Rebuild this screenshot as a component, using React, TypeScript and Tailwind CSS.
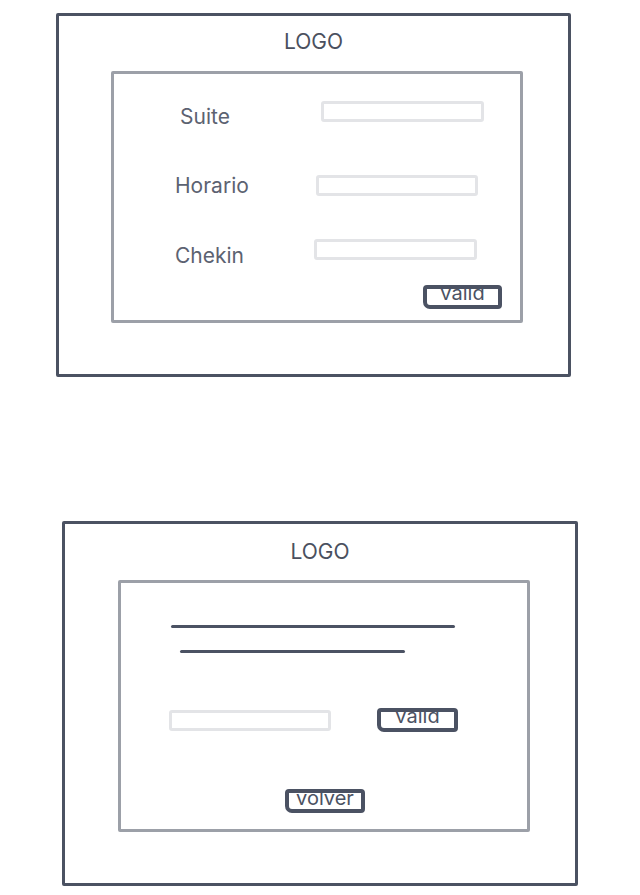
import React from 'react'

// ── Sketch pieces ──────────────────────────────────────────────────────────

function SketchInput({ className = '' }: { className?: string }) {
  return <div className={`h-[21px] border-[3px] border-[#e3e4e7] rounded-[3px] bg-white ${className}`} />
}

// the border is drawn over the label, so the tops of the letters get hidden like in the sketch
function SketchButton({ label, className = '', textTop = '-mt-[2px]' }: { label: string; className?: string; textTop?: string }) {
  return (
    <div className={`relative h-[24px] flex justify-center items-start ${className}`}>
      <span className={`${textTop} text-[20px] leading-[20px] text-[#4b5263] whitespace-nowrap`}>{label}</span>
      <div className="absolute inset-0 border-[4px] border-[#4b5263] rounded-[4px] rounded-bl-[7px]" />
    </div>
  )
}

function Logo() {
  return <div className="text-center text-[21px] leading-[24px] text-[#4a505e]">LOGO</div>
}

// ── Main ───────────────────────────────────────────────────────────────────

export default function App() {
  return (
    <div
      className="w-[640px] h-[895px] bg-white overflow-hidden"
      style={{ fontFamily: 'Inter, "Noto Sans", sans-serif' }}
    >
      {/* Screen 1: form */}
      <div className="ml-[56px] mt-[13px] w-[515px] h-[364px] border-[3px] border-[#4b5262] rounded-[2px] pt-[14px]">
        <Logo />
        <div className="ml-[52px] mt-[17px] w-[412px] h-[252px] border-[3px] border-[#9ca0a8] rounded-[2px] pt-[27px]">
          <div className="flex items-start h-[28px]">
            <span className="ml-[66px] w-[141px] mt-[4px] text-[21px] leading-[24px] text-[#5c6271]">Suite</span>
            <SketchInput className="w-[163px]" />
          </div>
          <div className="flex items-start h-[24px] mt-[45px]">
            <span className="ml-[61px] w-[141px] text-[21px] leading-[24px] text-[#5c6271]">Horario</span>
            <SketchInput className="w-[162px] mt-[1px]" />
          </div>
          <div className="flex items-start h-[29px] mt-[41px]">
            <span className="ml-[61px] w-[139px] mt-[5px] text-[21px] leading-[24px] text-[#5c6271]">Chekin</span>
            <SketchInput className="w-[163px]" />
          </div>
          <div className="flex justify-end mt-[17px] pr-[18px]">
            <SketchButton label="valid" className="w-[79px]" />
          </div>
        </div>
      </div>

      {/* Screen 2: confirmation */}
      <div className="ml-[62px] mt-[144px] w-[516px] h-[365px] border-[3px] border-[#4b5262] rounded-[2px] pt-[16px]">
        <Logo />
        <div className="ml-[53px] mt-[16px] w-[412px] h-[252px] border-[3px] border-[#9ca0a8] rounded-[2px] pt-[42px]">
          <div className="ml-[50px] w-[284px] h-[3px] rounded-full bg-[#4b5263]" />
          <div className="ml-[59px] mt-[22px] w-[225px] h-[3px] rounded-full bg-[#4b5263]" />
          <div className="flex items-center mt-[55px]">
            <SketchInput className="ml-[48px] w-[162px]" />
            <SketchButton label="valid" className="ml-[46px] w-[81px]" />
          </div>
          <div className="flex mt-[57px]">
            <SketchButton label="volver" className="ml-[164px] w-[80px]" textTop="-mt-[1px]" />
          </div>
        </div>
      </div>
    </div>
  )
}
